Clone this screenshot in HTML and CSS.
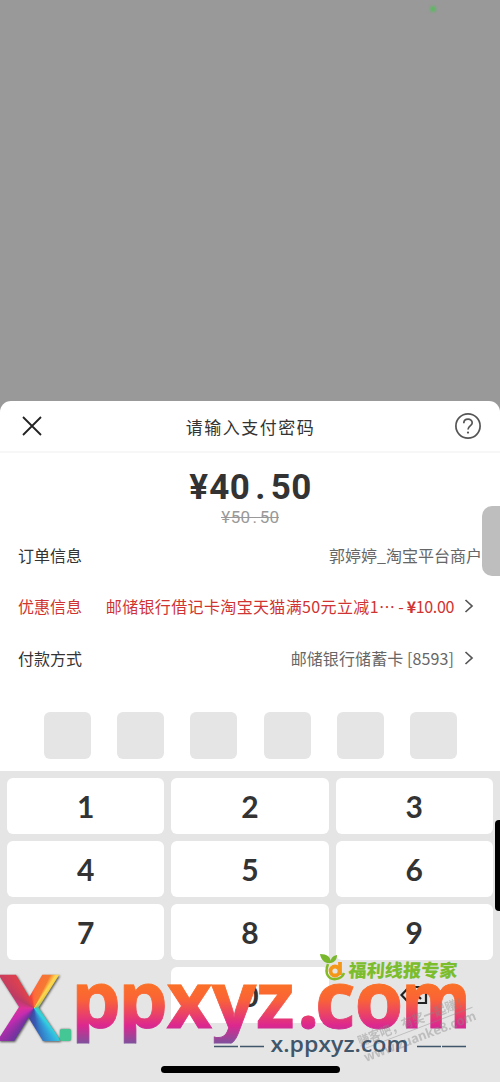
FILE: index.html
```html
<!DOCTYPE html>
<html lang="zh-CN">
<head>
<meta charset="utf-8">
<title>请输入支付密码</title>
<link rel="stylesheet" href="styles.css">
</head>
<body>
<main class="screen">
  <span class="status-dot"></span>
  <section class="sheet">
    <header class="head">
      <svg class="close" width="22" height="22" viewBox="0 0 22 22"><path d="M2 2 20 20M20 2 2 20"/></svg>
      <h1 class="title">请输入支付密码</h1>
      <svg class="help" width="28" height="28" viewBox="0 0 28 28"><circle cx="14" cy="14" r="12.1"/><path d="M9.8 11.2C9.8 5.7 18.4 5.8 18.2 11c-.1 3-4.2 3-4.2 6.500"/><circle class="help-dot" cx="14" cy="20.6" r="1.1"/></svg>
    </header>
    <div class="amount"><span>¥</span><span>4</span><span>0</span><span>.</span><span>5</span><span>0</span></div>
    <div class="original"><span>¥</span><span>5</span><span>0</span><span>.</span><span>5</span><span>0</span></div>
    <div class="rows">
      <div class="row merchant"><span class="label">订单信息</span><span class="value">郭婷婷_淘宝平台商户</span></div>
      <div class="row promo"><span class="label">优惠信息</span><span class="value">邮储银行借记卡淘宝天猫满50元立减1⋯</span><span class="saving">- <b>¥</b>10.00</span><svg class="arrow" width="10" height="16" viewBox="0 0 10 16"><path d="M1.500 2 8 8l-6.500 6"/></svg></div>
      <div class="row method"><span class="label">付款方式</span><span class="value">邮储银行储蓄卡 [8593]</span><svg class="arrow" width="10" height="16" viewBox="0 0 10 16"><path d="M1.500 2 8 8l-6.500 6"/></svg></div>
    </div>
    <div class="pins"><i></i><i></i><i></i><i></i><i></i><i></i></div>
  </section>
  <section class="keypad">
    <button>1</button><button>2</button><button>3</button>
    <button>4</button><button>5</button><button>6</button>
    <button>7</button><button>8</button><button>9</button>
    <span></span><button>0</button>
    <span class="delete"><svg width="28" height="20" viewBox="0 0 28 20"><path d="M9 2h17v16H9L1.500 10ZM13 6l8 8M21 6l-8 8"/></svg></span>
  </section>
  <span class="side-handle"></span>
  <span class="edge-bar"></span>
  <span class="home-bar"></span>
  <svg class="marks" width="500" height="142" viewBox="0 940 500 142">
    <defs>
      <linearGradient id="sunset" gradientUnits="userSpaceOnUse" x1="0" y1="985" x2="0" y2="1043">
        <stop offset="0" stop-color="#fa7028"/><stop offset=".25" stop-color="#fa6336"/><stop offset=".7" stop-color="#dc278f"/><stop offset="1" stop-color="#81509c"/>
      </linearGradient>
      <clipPath id="band"><path d="M0 940H500V1043.500H0Z"/></clipPath>
    </defs>
    <g class="big" clip-path="url(#band)">
      <text y="1028" x="71 118 166.500 211.500 256 297 315 354.500">ppxyz.co</text>
      <text y="1028" x="401" textLength="70" lengthAdjust="spacingAndGlyphs">m</text>
    </g>
    <g class="forum" transform="translate(366 1062) rotate(-21)">
      <text x="0" y="-17" textLength="117" lengthAdjust="spacingAndGlyphs">赚客吧，有奖一起赚！</text>
      <text x="0" y="0" textLength="119" lengthAdjust="spacingAndGlyphs">www.zuanke8.com</text>
      <path d="M2-13h117"/>
    </g>
    <text class="link" x="270.500" y="1052" textLength="138" lengthAdjust="spacingAndGlyphs">x.ppxyz.com</text>
    <path class="rules" d="M214 1046.500h24M240 1046.500h24M417 1046.500h24M442 1046.500h24"/>
    <g class="brand">
      <path class="leaf" d="M331 963c-6 1-10-3-11-9 7 0 11 3 11 9ZM331 963c-1-4 1-7 6-8 0 4-2 7-6 8Z"/>
      <path class="ring" d="M328 964c-4 10 1 16 8 15 4 0 7-3 8-6"/>
      <circle class="orange" cx="335" cy="971" r="4.500"/><path class="orange" d="M340 975V962"/>
      <text transform="translate(348 977) skewX(-4)" textLength="109" lengthAdjust="spacingAndGlyphs">福利线报专家</text>
    </g>
  </svg>
  <div class="rainbow">X</div>
  <span class="green-dot"></span>
</main>
</body>
</html>
```
FILE: styles.css
```css
* { box-sizing: border-box; }
body { margin: 0; font-family: "Noto Sans", "Noto Sans CJK SC", sans-serif; }
.screen { position: relative; width: 500px; height: 1082px; overflow: hidden; background: #999; padding-top: 401px; color: #333; }
.sheet { height: 370px; background: #fff; border-radius: 11px 11px 0 0; }
.head { height: 52px; border-bottom: 2px solid #f7f7f7; display: flex; align-items: center; justify-content: space-between; padding: 0 18px 0 21px; }
.title { margin: 0 0 0 4px; font: 400 17px "Noto Sans CJK SC", sans-serif; letter-spacing: 1.5px; }
svg { fill: none; flex-shrink: 0; }
.close { stroke: #222; stroke-width: 1.8; }
.help { stroke: #555; stroke-width: 1.7; }
.help-dot { fill: #555; stroke: none; }
.amount { display: flex; justify-content: center; height: 54px; padding-top: 14px; text-align: center; font: 700 35px/42px Roboto, sans-serif; }
.amount span { width: 20.5px; }
.original { position: relative; display: flex; width: 58px; height: 20px; margin: 0 auto; text-align: center; font: 17px/21px Roboto, sans-serif; color: #999; }
.original span { flex: 1; }
.original::after { content: ""; position: absolute; left: 0; right: 0; top: 10px; height: 1px; background: #999; }
.rows { padding: 2px 0 0 18px; font: 16px "Noto Sans CJK SC", sans-serif; }
.row { height: 51.5px; display: flex; align-items: center; padding-right: 26px; }
.label { flex: 1; }
.value { color: #666; white-space: nowrap; }
.merchant { padding-right: 18px; }
.promo, .promo .value { color: #cf3432; }
.promo .value { letter-spacing: .36px; }
.saving { margin-left: 3px; letter-spacing: -.35px; white-space: nowrap; }
.method .value { letter-spacing: .1px; }
.arrow { margin-left: 10px; stroke: #555; stroke-width: 1.7; }
.pins { display: flex; gap: 26.2px; padding: 28px 0 0 44px; }
.pins i { width: 47px; height: 47px; border-radius: 6px; background: #e5e5e5; }
.keypad { height: 311px; background: #e5e5e5; padding: 7px; display: grid; grid-template-columns: repeat(3, 1fr); grid-auto-rows: 56px; gap: 7px; align-content: start; }
.keypad button { border: 0; border-radius: 6px; padding: 0; background: #fff; color: #333; font: 700 30px Lato, sans-serif; }
.delete { display: flex; align-items: center; justify-content: center; stroke: #222; stroke-width: 2.2; }
.status-dot { position: absolute; left: 430px; top: 6px; width: 6px; height: 6px; border-radius: 50%; background: #60b765; filter: blur(1px); }
.side-handle { position: absolute; left: 482px; top: 506px; width: 28px; height: 70px; border-radius: 10px; background: #bebebe; }
.edge-bar { position: absolute; left: 495px; top: 820px; width: 9px; height: 91px; border-radius: 4px; background: #000; }
.home-bar { position: absolute; left: 161px; top: 1066px; width: 179px; height: 7px; border-radius: 4px; background: #000; }
.marks { position: absolute; left: 0; top: 940px; }
.big { font: 700 79px "Open Sans", sans-serif; fill: url(#sunset); stroke: url(#sunset); stroke-width: .8; }
.forum { font: 700 13px "Noto Sans", "Noto Sans CJK SC", sans-serif; fill: #888; stroke: #888; opacity: .42; }
.forum text { stroke: none; }
.link { font: 600 21px "Open Sans", sans-serif; fill: #40566a; }
.rules { stroke: #40566a; stroke-width: 1.3; }
.brand text { font: 900 18px "Noto Sans CJK SC", sans-serif; fill: #7cbd2e; }
.leaf { fill: #79b72c; }
.ring { stroke: #83ba25; stroke-width: 2.5; }
.orange { stroke: #f49719; stroke-width: 3.8; }
.rainbow { position: absolute; left: -1px; top: 957px; width: 61px; height: 96px; font: 700 90px/96px "Open Sans", sans-serif; color: transparent; -webkit-text-stroke: 2px transparent; background: conic-gradient(from 0deg at 35px 51px, #ff693b 0deg, #f47932 26deg, #ffd850 34deg, #e2c747 46deg, #44c5b0 90deg, #33d0dc 140deg, #32a6dd 150deg, #3659b2 175deg, #41459f 200deg, #7a32a0 216deg, #c52bb0 240deg, #de3298 270deg, #bb3b66 300deg, #d94052 325deg, #ef433b 345deg, #ff693b 360deg); background-clip: text; -webkit-background-clip: text; filter: drop-shadow(1px 1px 1px #555); }
.green-dot { position: absolute; left: 60px; top: 1029px; width: 11px; height: 12px; border-radius: 2px; background: #44c795; box-shadow: 0 0 2px #555; }
```
